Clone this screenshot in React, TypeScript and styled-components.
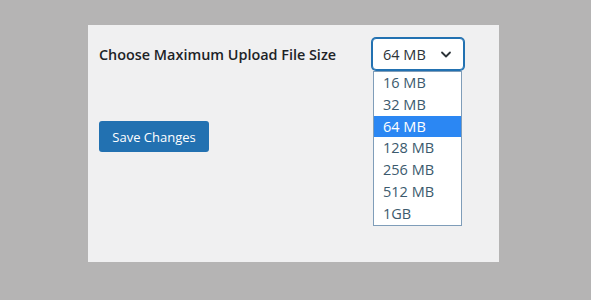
import React from "react";
import styled, { createGlobalStyle } from "styled-components";

const Global = createGlobalStyle`
  html, body { margin: 0; padding: 0; }
  body {
    background: #b5b4b4;
    font-family: "Open Sans", "Noto Sans", Arial, sans-serif;
    width: 591px;
    height: 300px;
    overflow: hidden;
  }
`;

const Panel = styled.div`
  margin: 25px 0 0 88px;
  width: 411px;
  height: 237px;
  box-sizing: border-box;
  background: #f0f0f1;
  padding: 13px 11px 0;
`;

const Row = styled.div`
  display: grid;
  grid-template-columns: 273px 92px;
  align-items: center;
`;

const Label = styled.label`
  font-size: 14.4px;
  font-weight: 600;
  color: #1d2327;
`;

const SelectWrap = styled.div`
  position: relative;
`;

const SelectBox = styled.div`
  height: 32px;
  box-sizing: border-box;
  border: 1px solid #2271b1;
  border-radius: 4px;
  background: #fff;
  box-shadow: 0 0 0 1px #2271b1;
  display: flex;
  align-items: center;
  justify-content: space-between;
  padding: 0 10px 0 10px;
  font-size: 14.5px;
  color: #2c3338;
`;

const Chevron = styled.svg`
  width: 14px;
  height: 14px;
`;

const List = styled.ul`
  position: absolute;
  top: 33px;
  left: 1px;
  width: 89px;
  margin: 0;
  padding: 0;
  list-style: none;
  background: #fff;
  border: 1px solid #7f9db9;
  box-sizing: border-box;
`;

const Item = styled.li<{ $active?: boolean }>`
  height: 21.8px;
  line-height: 21.8px;
  padding-left: 9px;
  font-size: 14.5px;
  color: ${(p) => (p.$active ? "#fff" : "#3b5a6d")};
  background: ${(p) => (p.$active ? "#2b87f3" : "transparent")};
`;

const Button = styled.button`
  margin-top: 51px;
  width: 110px;
  height: 31px;
  border: none;
  border-radius: 3px;
  background: #2271b1;
  color: #fff;
  font-family: inherit;
  font-size: 13px;
  padding: 0;
  cursor: pointer;
`;

const options = ["16 MB", "32 MB", "64 MB", "128 MB", "256 MB", "512 MB", "1GB"];

export default function App() {
  return (
    <>
      <Global />
      <Panel>
        <Row>
          <Label>Choose Maximum Upload File Size</Label>
          <SelectWrap>
            <SelectBox>
              <span>64 MB</span>
              <Chevron viewBox="0 0 14 14" fill="none" stroke="#2c3338" strokeWidth="1.8" strokeLinecap="round" strokeLinejoin="round">
                <path d="M3 5.5 L7 9.5 L11 5.5" />
              </Chevron>
            </SelectBox>
            <List>
              {options.map((o) => (
                <Item key={o} $active={o === "64 MB"}>
                  {o}
                </Item>
              ))}
            </List>
          </SelectWrap>
        </Row>
        <Button>Save Changes</Button>
      </Panel>
    </>
  );
}
